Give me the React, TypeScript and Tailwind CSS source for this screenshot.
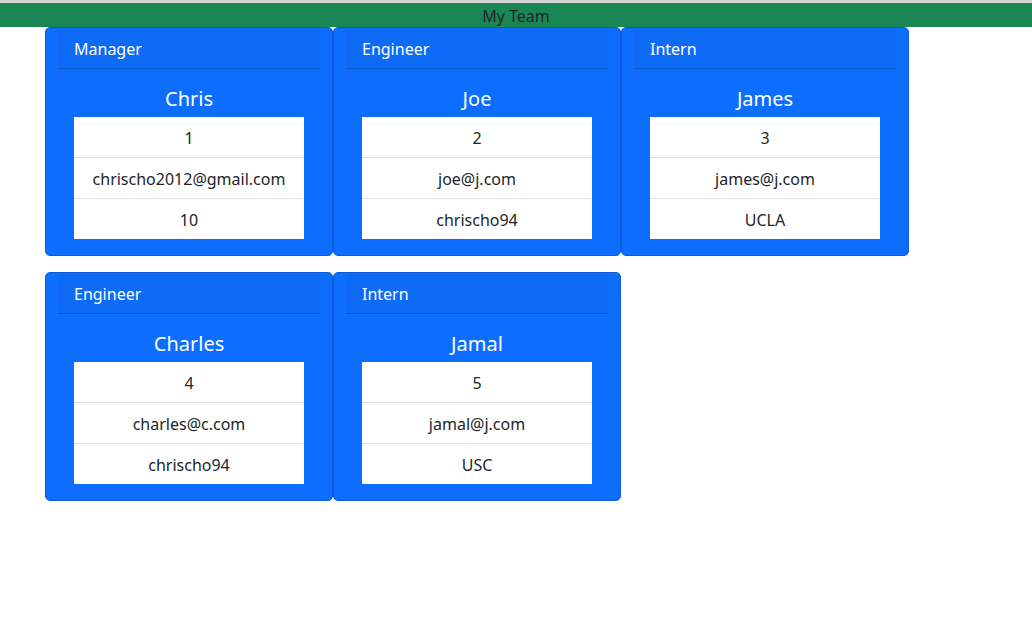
import React from "react";

type Member = { role: string; name: string; id: string; email: string; extra: string };

const rows: Member[][] = [
  [
    { role: "Manager", name: "Chris", id: "1", email: "chrischo2012@gmail.com", extra: "10" },
    { role: "Engineer", name: "Joe", id: "2", email: "joe@j.com", extra: "chrischo94" },
    { role: "Intern", name: "James", id: "3", email: "james@j.com", extra: "UCLA" },
  ],
  [
    { role: "Engineer", name: "Charles", id: "4", email: "charles@c.com", extra: "chrischo94" },
    { role: "Intern", name: "Jamal", id: "5", email: "jamal@j.com", extra: "USC" },
  ],
];

function Card({ m }: { m: Member }) {
  return (
    <div className="w-[288px] bg-[#0d6efd] border border-[#0b5ed7] rounded-[5px] px-[12px] flex flex-col">
      <div className="bg-[#0d6bf6] border-b border-[#0b58c8] px-[16px] pt-[9px] pb-[7px] leading-[24px] text-[16px] text-white">
        {m.role}
      </div>
      <div className="px-[16px] pt-[16px] pb-[16px] flex flex-col">
        <div className="text-center text-white text-[20px] leading-[24px] pt-[2px] mb-[6px]">{m.name}</div>
        <div className="bg-white text-[#212529] text-[16px] leading-[24px] text-center">
          <div className="pt-[9px] pb-[7px] border-b border-[#dee2e6]">{m.id}</div>
          <div className="pt-[9px] pb-[7px] border-b border-[#dee2e6]">{m.email}</div>
          <div className="pt-[9px] pb-[7px]">{m.extra}</div>
        </div>
      </div>
    </div>
  );
}

export default function App() {
  return (
    <div className="min-h-[633px] bg-white" style={{ fontFamily: '"Segoe UI", "Noto Sans", sans-serif' }}>
      <div className="h-[3px] bg-[#d4d4d4]" />
      <div className="h-[24px] bg-[#198754] text-center text-[#212529] text-[16px] leading-[26px]">My Team</div>
      <div className="flex flex-col gap-[16px] pl-[45px]">
        {rows.map((r, i) => (
          <div key={i} className="flex">
            {r.map((m, j) => (
              <Card key={j} m={m} />
            ))}
          </div>
        ))}
      </div>
    </div>
  );
}
